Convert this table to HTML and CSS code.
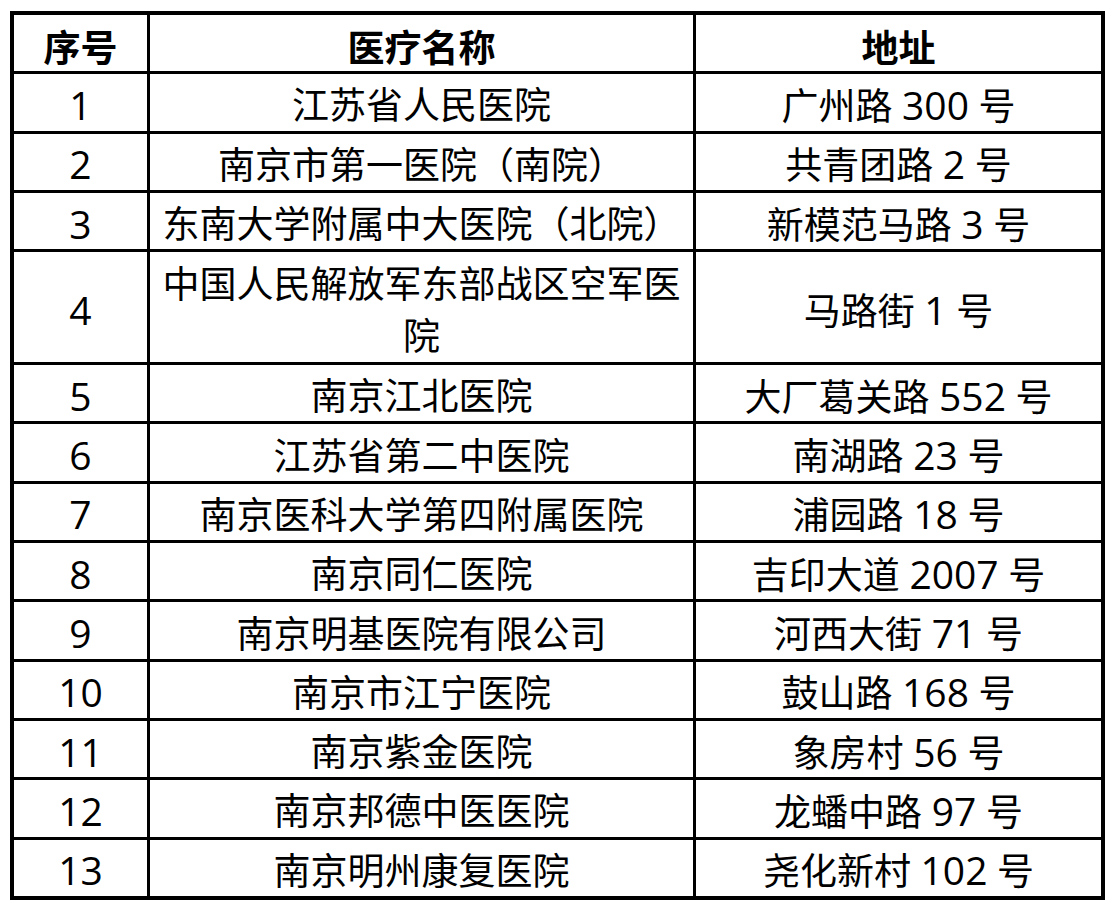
FILE: index.html
```html
<!DOCTYPE html>
<html lang="zh-CN">
<head>
<meta charset="utf-8">
<title>医疗名称</title>
<link rel="stylesheet" href="styles.css">
</head>
<body>
<table class="sheet">
  <colgroup>
    <col class="c-no">
    <col class="c-name">
    <col class="c-addr">
  </colgroup>
  <thead>
    <tr class="row head">
      <th>序号</th>
      <th>医疗名称</th>
      <th>地址</th>
    </tr>
  </thead>
  <tbody>
    <tr class="row"><td><span class="num">1</span></td><td>江苏省人民医院</td><td>广州路 <span class="num">300</span> 号</td></tr>
    <tr class="row"><td><span class="num">2</span></td><td>南京市第一医院（南院）</td><td>共青团路 <span class="num">2</span> 号</td></tr>
    <tr class="row"><td><span class="num">3</span></td><td>东南大学附属中大医院（北院）</td><td>新模范马路 <span class="num">3</span> 号</td></tr>
    <tr class="row tall"><td><span class="num">4</span></td><td class="wrap">中国人民解放军东部战区空军医<br>院</td><td>马路街 <span class="num">1</span> 号</td></tr>
    <tr class="row"><td><span class="num">5</span></td><td>南京江北医院</td><td>大厂葛关路 <span class="num">552</span> 号</td></tr>
    <tr class="row"><td><span class="num">6</span></td><td>江苏省第二中医院</td><td>南湖路 <span class="num">23</span> 号</td></tr>
    <tr class="row"><td><span class="num">7</span></td><td>南京医科大学第四附属医院</td><td>浦园路 <span class="num">18</span> 号</td></tr>
    <tr class="row"><td><span class="num">8</span></td><td>南京同仁医院</td><td>吉印大道 <span class="num">2007</span> 号</td></tr>
    <tr class="row"><td><span class="num">9</span></td><td>南京明基医院有限公司</td><td>河西大街 <span class="num">71</span> 号</td></tr>
    <tr class="row"><td><span class="num">10</span></td><td>南京市江宁医院</td><td>鼓山路 <span class="num">168</span> 号</td></tr>
    <tr class="row"><td><span class="num">11</span></td><td>南京紫金医院</td><td>象房村 <span class="num">56</span> 号</td></tr>
    <tr class="row"><td><span class="num">12</span></td><td>南京邦德中医医院</td><td>龙蟠中路 <span class="num">97</span> 号</td></tr>
    <tr class="row"><td><span class="num">13</span></td><td>南京明州康复医院</td><td>尧化新村 <span class="num">102</span> 号</td></tr>
  </tbody>
</table>
</body>
</html>
```

FILE: styles.css
```css
html, body {
  background: #ffffff;
}

body {
  margin: 11px 0 0 10px;
  font-family: "Open Sans", "Noto Sans CJK SC", sans-serif;
  color: #000000;
}

.sheet {
  width: 1095px;
  table-layout: fixed;
  border-collapse: separate;
  border-spacing: 3px;
  border: 1px solid #000000;
  background: #000000;
}

.c-no { width: 133px; }
.c-name { width: 543px; }
.c-addr { width: 405px; }

.sheet th,
.sheet td {
  background: #ffffff;
  padding: 6px 0 0;
  text-align: center;
  vertical-align: middle;
  font-size: 37px;
  line-height: 40px;
  height: 56.3px;
  white-space: nowrap;
  box-sizing: border-box;
}

.sheet th {
  font-weight: 700;
  font-family: "Noto Sans CJK SC", sans-serif;
}

.row.tall td {
  height: 110px;
}

.sheet td.wrap {
  line-height: 52px;
}

.num {
  font-family: "Open Sans", sans-serif;
  font-size: 39px;
  line-height: 1;
}
```
